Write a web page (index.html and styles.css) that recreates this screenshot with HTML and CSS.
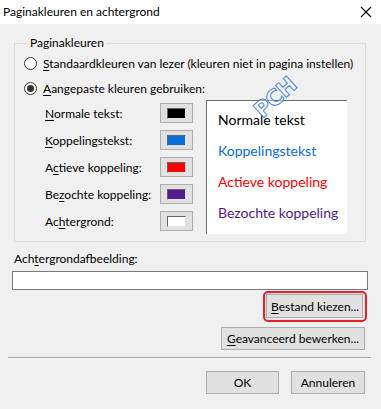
FILE: index.html
```html
<!DOCTYPE html>
<html>
<head>
  <title>Paginakleuren en achtergrond</title>
  <link rel="stylesheet" href="styles.css">
</head>
<body>
  <div class="titlebar">
    <span class="title">Paginakleuren en achtergrond</span>
    <svg class="close" width="12" height="12" viewBox="0 0 12 12">
      <path d="M1 1 L11 11 M11 1 L1 11" stroke="#000" stroke-width="1.1" fill="none"/>
    </svg>
  </div>

  <fieldset class="group">
    <legend>Paginakleuren</legend>
    <div class="radio-row">
      <span class="radio"></span>
      <span><u>S</u>tandaardkleuren van lezer (kleuren niet in pagina instellen)</span>
    </div>
    <div class="radio-row">
      <span class="radio checked"></span>
      <span><u>A</u>angepaste kleuren gebruiken:</span>
    </div>

    <div class="colors">
      <div class="color-grid">
        <span class="color-label"><u>N</u>ormale tekst:</span>
        <span class="swatch"><span class="chip black"></span></span>
        <span class="color-label"><u>K</u>oppelingstekst:</span>
        <span class="swatch"><span class="chip blue"></span></span>
        <span class="color-label">A<u>c</u>tieve koppeling:</span>
        <span class="swatch"><span class="chip red"></span></span>
        <span class="color-label">Be<u>z</u>ochte koppeling:</span>
        <span class="swatch"><span class="chip purple"></span></span>
        <span class="color-label">Ac<u>h</u>tergrond:</span>
        <span class="swatch"><span class="chip white"></span></span>
      </div>
      <div class="preview">
        <div class="preview-line">Normale tekst</div>
        <div class="preview-line link">Koppelingstekst</div>
        <div class="preview-line active">Actieve koppeling</div>
        <div class="preview-line visited">Bezochte koppeling</div>
      </div>
    </div>
    <span class="watermark">PCH</span>
  </fieldset>

  <div class="bg-label">Ach<u>t</u>ergrondafbeelding:</div>
  <div class="bg-input"></div>

  <div class="button-row first">
    <button class="button highlighted"><u>B</u>estand kiezen...</button>
  </div>
  <div class="button-row second">
    <button class="button wide"><u>G</u>eavanceerd bewerken...</button>
  </div>

  <div class="separator"></div>

  <div class="button-row footer">
    <button class="button ok">OK</button>
    <button class="button cancel">Annuleren</button>
  </div>
</body>
</html>
```

FILE: styles.css
```css
body {
  margin: 0;
  width: 381px;
  height: 409px;
  overflow: hidden;
  background-color: #f0f0f0;
  font-family: Lato, "Noto Sans", sans-serif;
  font-size: 12px;
  color: #000;
  white-space: nowrap;
}

u {
  text-decoration-thickness: 1px;
  text-underline-offset: 2px;
}

.titlebar {
  height: 24px;
  background-color: #fff;
  display: flex;
  align-items: center;
  justify-content: space-between;
  padding: 0 9px 0 3px;
}

.title {
  line-height: 16px;
}

.close {
  display: block;
}

/* group box */
.group {
  position: relative;
  box-sizing: border-box;
  width: 352px;
  margin: 11px 0 0 14px;
  padding: 2px 0 7px 9px;
  border: 1px solid #dcdcdc;
}

.group legend {
  padding: 0 2px;
  margin-left: 4px;
  line-height: 16px;
}

.radio-row {
  display: flex;
  align-items: center;
  height: 20px;
  margin-bottom: 5px;
}

.radio {
  position: relative;
  box-sizing: border-box;
  width: 13px;
  height: 13px;
  border: 1px solid #333;
  border-radius: 50%;
  background-color: #fff;
  margin-right: 6px;
}

.radio.checked::after {
  content: "";
  position: absolute;
  left: 2px;
  top: 2px;
  width: 7px;
  height: 7px;
  border-radius: 50%;
  background-color: #333;
}

.colors {
  display: flex;
  margin-top: -3px;
}

.color-grid {
  display: grid;
  grid-template-columns: 115px 33px;
  grid-auto-rows: 20px;
  row-gap: 7px;
  align-items: center;
  padding: 3px 0 0 21px;
}

.swatch {
  box-sizing: border-box;
  width: 33px;
  height: 20px;
  border: 1px solid #adadad;
  background-color: #e1e1e1;
  display: flex;
  align-items: center;
  justify-content: center;
}

.chip {
  box-sizing: border-box;
  width: 19px;
  height: 11px;
  border: 1px solid #646464;
  border-right-color: #e3e3e3;
  border-bottom-color: #e3e3e3;
}

.black { background-color: #000; }
.blue { background-color: #0a6ed9; }
.red { background-color: #ff0000; }
.purple { background-color: #551a8b; }
.white { background-color: #fff; }

.preview {
  box-sizing: border-box;
  width: 141px;
  height: 134px;
  margin-left: 13px;
  background-color: #fff;
  border-top: 1px solid #6e6e6e;
  border-left: 1px solid #6e6e6e;
  padding: 10px 0 0 11px;
  font-size: 14px;
}

.preview-line {
  height: 31px;
  line-height: 18px;
}

.preview-line.link { color: #0a6ed9; }
.preview-line.active { color: #ff0000; }
.preview-line.visited { color: #551a8b; }

.watermark {
  position: absolute;
  left: 236px;
  top: 34px;
  transform: rotate(-42deg);
  font-family: "DejaVu Sans", sans-serif;
  font-weight: bold;
  font-size: 22px;
  letter-spacing: -1px;
  color: rgba(255, 255, 255, 0.4);
  -webkit-text-stroke: 1px #4a86d8;
}

/* background image */
.bg-label {
  margin: 9px 0 0 14px;
  line-height: 16px;
}

.bg-input {
  box-sizing: border-box;
  width: 356px;
  height: 19px;
  margin: 4px 0 0 12px;
  background-color: #fff;
  border: 1px solid #7a7a7a;
}

.button-row {
  display: flex;
  justify-content: flex-end;
  gap: 12px;
}

.button-row.first {
  margin: 4px 18px 0 0;
}

.button-row.second {
  margin: 9px 16px 0 0;
}

.button-row.footer {
  margin: 12px 16px 0 0;
}

.button {
  box-sizing: border-box;
  height: 23px;
  padding: 0 4px;
  font-family: inherit;
  font-size: 12px;
  color: #000;
  background-color: #e1e1e1;
  border: 1px solid #adadad;
  border-radius: 0;
  white-space: nowrap;
}

.highlighted {
  position: relative;
  width: 97px;
  height: 24px;
}

.highlighted::after {
  content: "";
  position: absolute;
  left: -4px;
  top: -4px;
  right: -5px;
  bottom: -5px;
  border: 2px solid #e8202a;
  border-radius: 5px;
  box-shadow: inset 0 0 2px rgba(0, 0, 0, 0.25);
}

.wide {
  width: 144px;
}

.ok {
  width: 73px;
}

.cancel {
  width: 74px;
}

.separator {
  height: 0;
  margin: 7px 10px 0 8px;
  border-top: 1px solid #a0a0a0;
  border-bottom: 1px solid #fff;
}
```
